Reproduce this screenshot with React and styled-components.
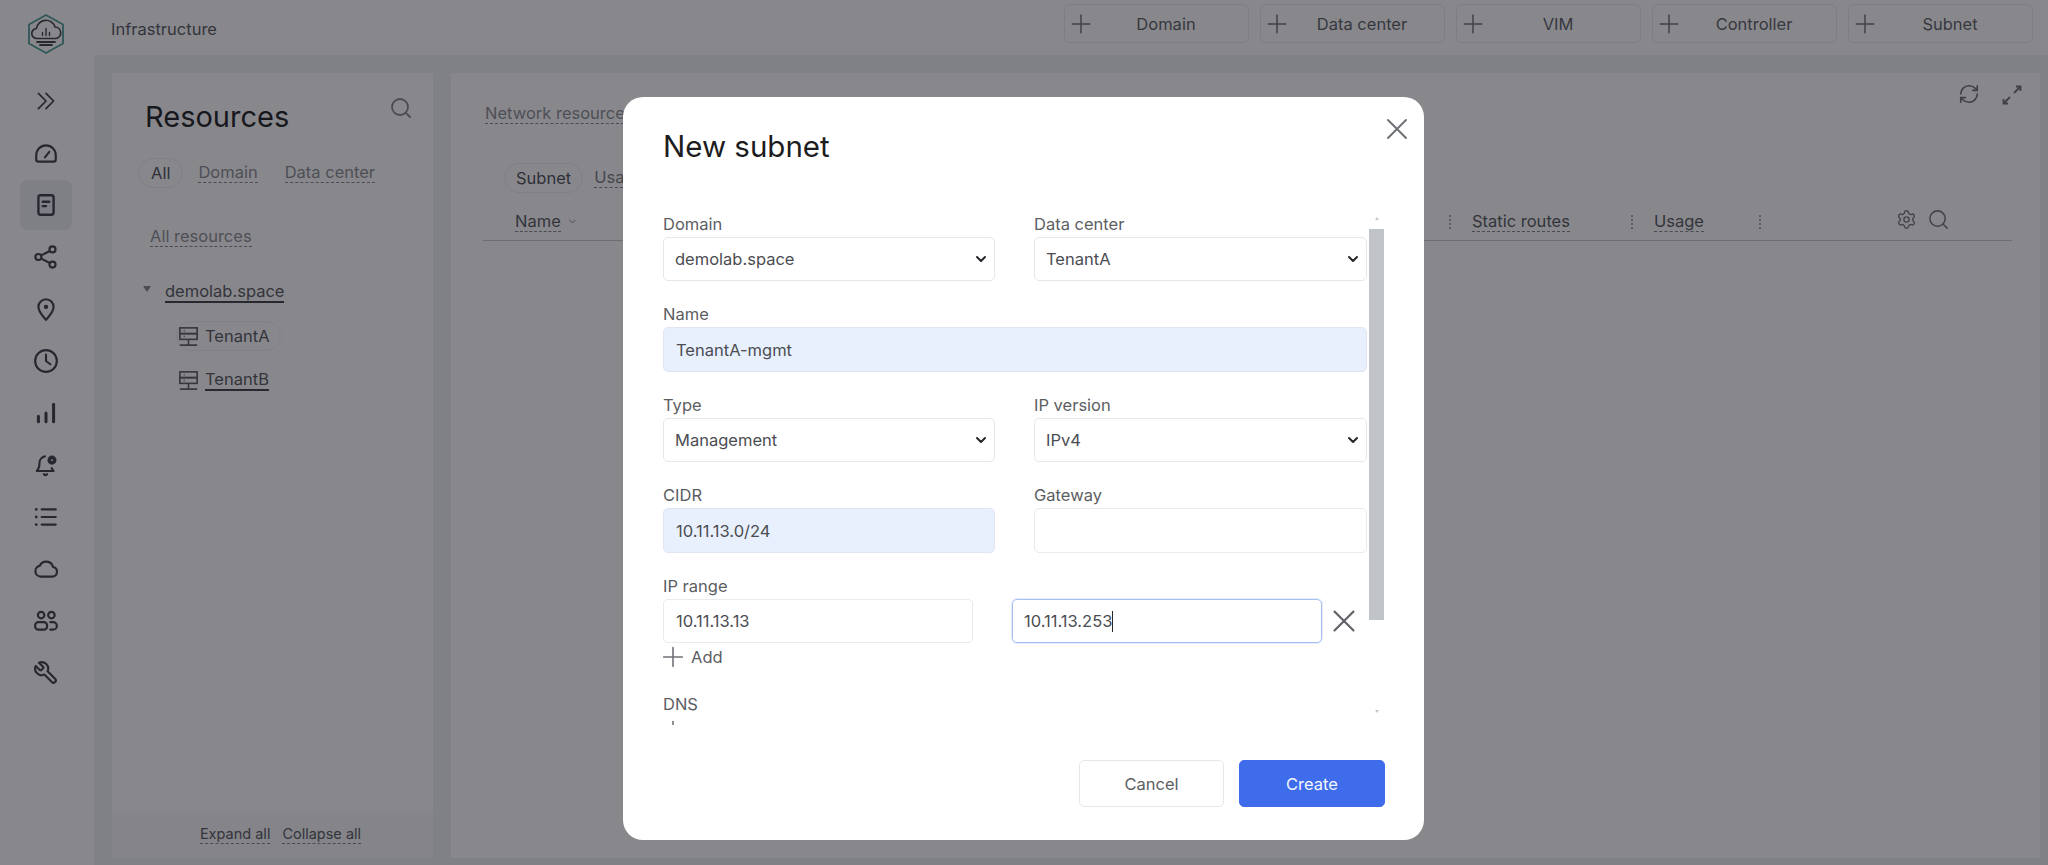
import React from "react";
import styled, { createGlobalStyle } from "styled-components";
import { ChevronDown, Plus, RefreshCw, Search, Settings, X } from "lucide-react";

const GlobalStyle = createGlobalStyle`
html, body {
  margin: 0;
  padding: 0;
  height: 100%;
  overflow: hidden;
  font-family: Inter, "Liberation Sans", sans-serif;
  font-size: 16.5px;
  color: #55575d;
}
* { box-sizing: border-box; }
`;

const Page = styled.div`
display: flex;
width: 2048px;
height: 865px;
background: #eef0f2;
`;

const Sidebar = styled.nav`
display: flex;
flex-direction: column;
align-items: center;
width: 94px;
flex: none;
background: #ffffff;
padding: 8px 2px 0 0;
`;

const LogoBox = styled.div`
display: flex;
height: 52px;
align-items: center;
margin-bottom: 16px;
`;

const NavItem = styled.div`
display: flex;
align-items: center;
justify-content: center;
width: 52px;
height: 50px;
margin-bottom: 2px;
border-radius: 8px;
color: #3c3e44;
background: ${(p) => (p.$active ? "#eceef0" : "transparent")};
`;

const Main = styled.div`
display: flex;
flex-direction: column;
flex: 1;
min-width: 0;
`;

const Header = styled.header`
display: flex;
align-items: flex-start;
justify-content: space-between;
height: 55px;
flex: none;
background: #ffffff;
padding: 4px 15px 0 17px;
`;

const HeaderTitle = styled.span`
margin-top: 15px;
line-height: 20px;
color: #56585e;
`;

const HeaderActions = styled.div`
display: flex;
gap: 11px;
`;

const AddButton = styled.div`
display: flex;
align-items: center;
width: 185px;
height: 39px;
padding: 0 12px 0 1px;
border: 1px solid #e8e9eb;
border-radius: 6px;
background: #ffffff;
color: #5c5e64;
`;

const AddLabel = styled.span`
flex: 1;
text-align: center;
`;

const Content = styled.div`
display: flex;
flex: 1;
gap: 18px;
padding: 18px 8px 7px 18px;
min-height: 0;
`;

const ResourcesPanel = styled.section`
display: flex;
flex-direction: column;
width: 321px;
flex: none;
background: #ffffff;
`;

const PanelHead = styled.div`
display: flex;
justify-content: space-between;
padding: 23px 20px 0 33px;
color: #85878d;
`;

const PanelTitle = styled.h2`
margin: 3px 0 0;
font-size: 29px;
line-height: 36px;
font-weight: 400;
color: #1c1c22;
`;

const FilterRow = styled.div`
display: flex;
align-items: center;
height: 30px;
margin: 23px 0 0 26px;
`;

const PillTab = styled.span`
display: inline-flex;
align-items: center;
height: 30px;
padding: 0 ${(p) => p.$px || 12}px;
border: 1px solid #ececee;
border-radius: 15px;
color: #4e5056;
`;

const DashedLink = styled.span`
display: inline-block;
line-height: 19px;
border-bottom: 1px dashed #85878d;
color: ${(p) => p.$color || "#8b8d93"};
font-size: ${(p) => p.$size || 16.5}px;
margin-left: ${(p) => p.$ml || 0}px;
`;

const AllResources = styled.div`
margin: 38px 0 0 38px;
`;

const Tree = styled.div`
display: flex;
flex-direction: column;
margin-top: 31px;
padding-left: 31px;
`;

const TreeRoot = styled.div`
display: flex;
align-items: center;
gap: 14px;
height: 28px;
`;

const Caret = styled.span`
width: 0;
height: 0;
margin-top: -6px;
border-left: 4px solid transparent;
border-right: 4px solid transparent;
border-top: 6px solid #85878d;
`;

const SolidLink = styled.span`
line-height: 20px;
border-bottom: 2px solid #3f4147;
color: #55575d;
`;

const TreeLeaf = styled.div`
display: flex;
align-items: center;
gap: 5px;
height: 30px;
width: fit-content;
margin: ${(p) => p.$mt}px 0 0 33px;
padding: 0 10px 0 0;
color: #55575d;
border: ${(p) => (p.$pill ? "1px solid #f0f0f2" : "1px solid transparent")};
border-radius: 15px;
`;

const PanelFoot = styled.div`
display: flex;
align-items: flex-start;
justify-content: center;
gap: 12px;
margin-top: auto;
height: 45px;
padding: 11px 0 0 16px;
background: #f6f7f8;
`;

const TablePanel = styled.section`
display: flex;
flex-direction: column;
flex: 1;
min-width: 0;
padding: 10px 28px 0 32px;
background: #ffffff;
`;

const TopRow = styled.div`
display: flex;
justify-content: space-between;
height: 40px;
`;

const TopLink = styled.div`
margin: 20px 0 0 2px;
`;

const TopTools = styled.div`
display: flex;
gap: 20px;
margin-right: -12px;
color: #6c6e74;
`;

const TabRow = styled.div`
display: flex;
align-items: center;
gap: 11px;
margin: 40px 0 0 21px;
`;

const HeadRow = styled.div`
display: flex;
align-items: center;
height: 36px;
margin-top: 12px;
border-bottom: 1px solid #c8cacd;
padding: 0 0 2px 32px;
`;

const NameCell = styled.div`
display: flex;
align-items: center;
gap: 6px;
flex: 1;
color: #7a7c82;
`;

const ColCell = styled.div`
display: flex;
align-items: center;
gap: 21px;
width: ${(p) => p.$w}px;
`;

const ColDots = styled.span`
height: 14px;
border-left: 2px dotted #a9abb0;
`;

const ColTools = styled.div`
display: flex;
align-items: center;
gap: 10px;
width: 251px;
padding: 0 0 4px 135px;
color: #75777d;
`;

const Backdrop = styled.div`
position: fixed;
inset: 0;
background: rgba(17, 17, 25, 0.5);
`;

const Modal = styled.div`
position: fixed;
left: 623px;
top: 97px;
width: 801px;
height: 743px;
padding: 31px 39px 0 40px;
background: #ffffff;
border-radius: 20px;
`;

const CloseButton = styled.span`
position: absolute;
right: 9px;
top: 14px;
display: flex;
color: #6f7177;
`;

const ModalTitle = styled.h1`
margin: 0 0 49px;
font-size: 29.5px;
line-height: 36px;
font-weight: 400;
color: #1c1c20;
`;

const ModalBody = styled.div`
display: flex;
gap: 2px;
height: 512px;
`;

const FormScroll = styled.div`
width: 704px;
flex: none;
overflow: hidden;
`;

const FormGrid = styled.div`
display: grid;
grid-template-columns: 332px 333px;
column-gap: 39px;
row-gap: 22px;
`;

const Field = styled.div`
grid-column: ${(p) => (p.$wide ? "1 / -1" : "auto")};
`;

const Label = styled.div`
height: 24px;
padding-top: 1px;
line-height: 20px;
color: #5c5e62;
`;

const SelectBox = styled.div`
position: relative;
`;

const SelectChevron = styled.span`
position: absolute;
right: 6px;
top: 14px;
display: flex;
color: #26272b;
pointer-events: none;
`;

const Select = styled.select`
display: block;
width: 100%;
height: 44px;
padding: 0 11px;
font: inherit;
color: #4b4d52;
background: #ffffff;
border: 1px solid #e6e7e9;
border-radius: 5px;
outline: none;
appearance: none;
`;

const Input = styled.input`
display: block;
width: ${(p) => (p.$w ? `${p.$w}px` : "100%")};
height: ${(p) => p.$h || 45}px;
padding: 0 12px;
font: inherit;
color: #4b4d52;
background: ${(p) => (p.$filled ? "#e8f0fe" : "#ffffff")};
border: 1px solid ${(p) => (p.$filled ? "#dfe6f2" : "#e9eaec")};
border-radius: 5px;
outline: none;
`;

const FocusedInput = styled.div`
display: flex;
align-items: center;
width: 310px;
height: 44px;
padding: 0 11px;
color: #4b4d52;
border: 1px solid #a4c1f2;
border-radius: 5px;
box-shadow: 0 0 0 1px #e4ecfb;
`;

const TextCursor = styled.span`
width: 1px;
height: 21px;
background: #26272b;
`;

const RangeRow = styled.div`
display: flex;
align-items: center;
gap: 39px;
`;

const RemoveIcon = styled.span`
display: flex;
margin-left: -36px;
color: #5f6167;
`;

const AddRow = styled.div`
display: flex;
align-items: center;
gap: 2px;
height: 28px;
margin-left: -6px;
color: #5c5e62;
`;

const ScrollTrack = styled.div`
display: flex;
flex-direction: column;
align-items: center;
width: 15px;
flex: none;
padding-top: 4px;
`;

const ScrollArrow = styled.span`
width: 0;
height: 0;
border-left: 2.5px solid transparent;
border-right: 2.5px solid transparent;
border-top: ${(p) => (p.$down ? "3px solid #c3c6ca" : "none")};
border-bottom: ${(p) => (p.$down ? "none" : "3px solid #c3c6ca")};
margin-top: ${(p) => (p.$down ? "auto" : "0")};
margin-bottom: ${(p) => (p.$down ? "12px" : "9px")};
`;

const ScrollThumb = styled.div`
width: 100%;
height: 391px;
background: #c0c4c9;
`;

const ModalFoot = styled.div`
display: flex;
justify-content: flex-end;
gap: 15px;
margin-top: 35px;
`;

const FootButton = styled.div`
display: flex;
align-items: center;
justify-content: center;
height: 47px;
width: ${(p) => p.$w}px;
border-radius: 5px;
border: 1px solid ${(p) => (p.$primary ? "#3f6ceb" : "#e6e7e9")};
background: ${(p) => (p.$primary ? "#3f6ceb" : "#ffffff")};
color: ${(p) => (p.$primary ? "#f4f7ff" : "#5c5e62")};
`;

const Icon = ({ size = 26, sw = 2, children }) => (
  <svg width={size} height={size} viewBox="0 0 24 24" fill="none" stroke="currentColor" strokeWidth={sw} strokeLinecap="round" strokeLinejoin="round">
    {children}
  </svg>
);

const Logo = () => (
  <svg width="40" height="42" viewBox="0 0 40 42" fill="none" strokeLinecap="round" strokeLinejoin="round">
    <path d="M20 2 37 11.5v19L20 40 3 30.5v-19z" stroke="#4c9c94" strokeWidth="1.8" />
    <path d="M11 25.500a5 5 0 0 1-.5-10 9.500 9.500 0 0 1 18.500-1.500A5.800 5.800 0 0 1 30 25.500z" stroke="#3e4046" strokeWidth="1.7" />
    <path d="M16.500 22.500v-3M20 22.500v-7M23.500 22.500v-3" stroke="#3e4046" strokeWidth="1.4" />
    <path d="M11 29h18M14 32h12" stroke="#3e4046" strokeWidth="1.8" />
  </svg>
);

const navIcons = [
  <Icon key="expand"><path d="m5 5 7 7-7 7M12 5l7 7-7 7" strokeWidth="1.600" /></Icon>,
  <Icon key="dash"><path d="M5 20h14c1.500 0 2-.8 2-2v-4a9 9 0 1 0-18 0v4c0 1.200.5 2 2 2z" /><path d="m11 16 4-5" /></Icon>,
  <Icon key="doc" sw="2.200"><rect x="5" y="3" width="14" height="18" rx="2" /><path d="M9 9h6M9 13h3" /></Icon>,
  <Icon key="share"><circle cx="18" cy="5" r="2.800" /><circle cx="5" cy="12" r="2.800" /><circle cx="18" cy="19" r="2.800" /><path d="m7.500 10.500 8-4M7.500 13.500l8 4" /></Icon>,
  <Icon key="pin"><path d="M12 22c-3-3.500-7-7-7-12a7 7 0 0 1 14 0c0 5-4 8.500-7 12z" /><circle cx="12" cy="10" r="1" fill="currentColor" /></Icon>,
  <Icon key="clock"><circle cx="12" cy="12" r="10" /><path d="M12 6v6l4 3" /></Icon>,
  <Icon key="bars" sw="2.800"><path d="M5 15v5M12 12v8M19 4v16" /></Icon>,
  <Icon key="bell"><path d="M11 4a6 6 0 0 0-5 6c0 4-1 6-2.500 7.500h15.500c-.8-.8-1.300-1.600-1.700-2.500" /><path d="M10 20.500c.8.800 2.200.800 3 0" /><circle cx="17.500" cy="7.500" r="3.200" fill="currentColor" /><circle cx="17.500" cy="7.500" r=".8" fill="#fff" stroke="none" /></Icon>,
  <Icon key="list"><path d="M8 5h13M8 12h13M8 19h13" /><path d="M3 5h.01M3 12h.01M3 19h.01" strokeWidth="2.600" /></Icon>,
  <Icon key="cloud"><path d="M7 19a5 5 0 0 1-.8-9.900 6.500 6.500 0 0 1 12.300 1A4.500 4.500 0 0 1 18 19z" /></Icon>,
  <Icon key="users"><circle cx="7.500" cy="6.500" r="3" /><circle cx="17" cy="6.500" r="3" /><rect x="2" y="13" width="11" height="7" rx="3" /><path d="M16 13h2.500a3.500 3.500 0 0 1 0 7H16" /></Icon>,
  <Icon key="wrench">
    <g transform="translate(24 0) scale(-1 1)">
      <path d="M14.700 6.300a1 1 0 0 0 0 1.400l1.600 1.600a1 1 0 0 0 1.400 0l3.770-3.770a6 6 0 0 1-7.940 7.940l-6.910 6.910a2.120 2.120 0 0 1-3-3l6.910-6.910a6 6 0 0 1 7.940-7.940l-3.760 3.760z" />
    </g>
  </Icon>,
];

const ServerIcon = () => (
  <svg width="23" height="23" viewBox="0 0 24 24" fill="none" stroke="#5c5e64" strokeWidth="1.700">
    <rect x="3" y="3" width="18" height="6" />
    <rect x="3" y="9" width="18" height="6" />
    <path d="M12 15v6M3 21h18M7 6h1M7 12h1" />
  </svg>
);

const ExpandIcon = () => (
  <svg width="24" height="24" viewBox="0 0 24 24" fill="none" stroke="currentColor" strokeWidth="1.800">
    <path d="m14 10 6-6M16 3.500h4.500V8M10 14l-6 6M3.500 16v4.500H8" />
  </svg>
);

const PlusIcon = ({ size = 30 }) => <Plus size={size} strokeWidth={1.2} color="#6f7177" />;

const actions = ["Domain", "Data center", "VIM", "Controller", "Subnet"];

const SelectField = ({ label, value }) => (
  <Field>
    <Label>{label}</Label>
    <SelectBox>
      <Select defaultValue={value}>
        <option>{value}</option>
      </Select>
      <SelectChevron><ChevronDown size={16} strokeWidth={3} /></SelectChevron>
    </SelectBox>
  </Field>
);

const App = () => (
  <>
    <GlobalStyle />
    <Page>
      <Sidebar>
        <LogoBox><Logo /></LogoBox>
        {navIcons.map((icon, i) => (
          <NavItem key={i} $active={i === 2}>{icon}</NavItem>
        ))}
      </Sidebar>
      <Main>
        <Header>
          <HeaderTitle>Infrastructure</HeaderTitle>
          <HeaderActions>
            {actions.map((a) => (
              <AddButton key={a}>
                <PlusIcon />
                <AddLabel>{a}</AddLabel>
              </AddButton>
            ))}
          </HeaderActions>
        </Header>
        <Content>
          <ResourcesPanel>
            <PanelHead>
              <PanelTitle>Resources</PanelTitle>
              <Search size={24} strokeWidth={1.800} />
            </PanelHead>
            <FilterRow>
              <PillTab>All</PillTab>
              <DashedLink $ml={15}>Domain</DashedLink>
              <DashedLink $ml={27}>Data center</DashedLink>
            </FilterRow>
            <AllResources><DashedLink>All resources</DashedLink></AllResources>
            <Tree>
              <TreeRoot>
                <Caret />
                <SolidLink>demolab.space</SolidLink>
              </TreeRoot>
              <TreeLeaf $mt={15} $pill><ServerIcon />TenantA</TreeLeaf>
              <TreeLeaf $mt={14}><ServerIcon /><SolidLink>TenantB</SolidLink></TreeLeaf>
            </Tree>
            <PanelFoot>
              <DashedLink $size={14.500} $color="#56585e">Expand all</DashedLink>
              <DashedLink $size={14.500} $color="#56585e">Collapse all</DashedLink>
            </PanelFoot>
          </ResourcesPanel>
          <TablePanel>
            <TopRow>
              <TopLink><DashedLink>Network resources</DashedLink></TopLink>
              <TopTools>
                <RefreshCw size={22} strokeWidth={1.800} />
                <ExpandIcon />
              </TopTools>
            </TopRow>
            <TabRow>
              <PillTab $px={11}>Subnet</PillTab>
              <DashedLink $color="#7a7c82">Usage</DashedLink>
            </TabRow>
            <HeadRow>
              <NameCell>
                <DashedLink $color="#55575d">Name</DashedLink>
                <ChevronDown size={11} />
              </NameCell>
              <ColCell $w={182}><ColDots /><DashedLink $color="#55575d">Static routes</DashedLink></ColCell>
              <ColCell $w={128}><ColDots /><DashedLink $color="#55575d">Usage</DashedLink></ColCell>
              <ColDots />
              <ColTools>
                <Settings size={21} strokeWidth={1.600} />
                <Search size={23} strokeWidth={1.600} />
              </ColTools>
            </HeadRow>
          </TablePanel>
        </Content>
      </Main>
      <Backdrop />
      <Modal>
        <CloseButton><X size={36} strokeWidth={1.300} /></CloseButton>
        <ModalTitle>New subnet</ModalTitle>
        <ModalBody>
          <FormScroll>
            <FormGrid>
              <SelectField label="Domain" value="demolab.space" />
              <SelectField label="Data center" value="TenantA" />
              <Field $wide>
                <Label>Name</Label>
                <Input $filled defaultValue="TenantA-mgmt" />
              </Field>
              <SelectField label="Type" value="Management" />
              <SelectField label="IP version" value="IPv4" />
              <Field>
                <Label>CIDR</Label>
                <Input $filled defaultValue="10.11.13.0/24" />
              </Field>
              <Field>
                <Label>Gateway</Label>
                <Input />
              </Field>
              <Field $wide>
                <Label>IP range</Label>
                <RangeRow>
                  <Input $w={310} $h={44} defaultValue="10.11.13.13" />
                  <FocusedInput>10.11.13.253<TextCursor /></FocusedInput>
                  <RemoveIcon><X size={38} strokeWidth={1.300} /></RemoveIcon>
                </RangeRow>
                <AddRow><PlusIcon size={32} />Add</AddRow>
              </Field>
              <Field $wide>
                <Label>DNS</Label>
                <AddRow><PlusIcon size={32} />Add</AddRow>
              </Field>
            </FormGrid>
          </FormScroll>
          <ScrollTrack>
            <ScrollArrow />
            <ScrollThumb />
            <ScrollArrow $down />
          </ScrollTrack>
        </ModalBody>
        <ModalFoot>
          <FootButton $w={145}>Cancel</FootButton>
          <FootButton $w={146} $primary>Create</FootButton>
        </ModalFoot>
      </Modal>
    </Page>
  </>
);

export default App;
